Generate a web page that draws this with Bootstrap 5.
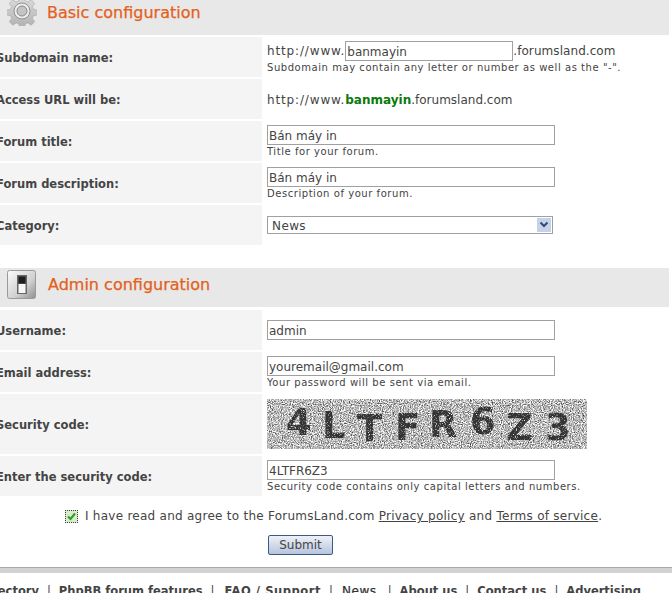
<!DOCTYPE html>
<html lang="en"><head><meta charset="utf-8"><title>Forum configuration</title>
<link href="https://cdn.jsdelivr.net/npm/bootstrap@5.3.0/dist/css/bootstrap.min.css" rel="stylesheet">
<style>
html,body{margin:0;height:593px;overflow:hidden;background:#fff}
body{font-family:"DejaVu Sans",Verdana,sans-serif;font-size:12px;color:#444;line-height:14px}
.sec-head{width:669px;background:#e8e8e8;color:#e4601b;font-size:16px;gap:10px;padding-left:7px;-webkit-text-stroke:.25px #e4601b}
.sec-one{height:35px;overflow:hidden;margin-bottom:2px;padding-bottom:10px}
.sec-one svg{margin-top:-3px}
.sec-two{height:39px;margin-top:23px;margin-bottom:3px;padding-bottom:6px;gap:12px}
.frow{display:flex;min-height:40px;margin-bottom:2px}
.cap-row{min-height:60px}
.lbl{width:262px;flex:none;background:#f4f4f4;font-weight:700;font-size:11.5px;color:#444;text-indent:-4px;padding-top:1px}
.val{padding-left:5px;flex:1 1 auto}
.cap-val{padding-top:5px}
.cap-val svg{display:block}
.hint{font-size:10px;line-height:11px;letter-spacing:.55px;display:block;margin-top:1px;color:#444}
.wide-txt{letter-spacing:.85px}
.dom-txt{letter-spacing:.07px}
.fld{border:1px solid #a0a0a0;height:20px;width:288px;padding:1px 2px 0 1px;font:12px "DejaVu Sans",sans-serif;color:#444;display:block;outline:0;background:#fff}
.fld-sub{width:168px;display:inline-block;vertical-align:middle}
.fld-top{margin-top:6px}
.fake-sel{width:286px;height:18px;border:1px solid #a0a0a0;padding:0 0 0 4px;letter-spacing:.4px}
.sel-txt{padding-top:1px}
.sel-btn{width:16px;height:16px;background:#c6d2ea;border:1px solid #fff;color:#3a4a66}
.access{padding-top:1px}
.access b{color:#0a7a0a}
.agree{margin-left:65px;margin-top:9px;gap:7px;height:22px;letter-spacing:.26px}
.agree a{color:#444}
.chk{width:13px;height:13px;border:1px dotted #444;background:#d9ecc9}
.sub-wrap{margin-top:8px;margin-left:268px}
.sub-btn{width:65px;height:20px;border:1px solid #3c5a82;border-radius:2px;background:linear-gradient(#eef1f8,#b6c4de);color:#444;font-size:12px;padding:0;line-height:16px}
.foot-line{height:6px;margin-top:12px;background:#d2d2d2;border-top:1px solid #aaa}
.foot-links{white-space:nowrap;font-size:11.5px;font-weight:700;margin-top:11px;padding-right:31px;gap:8px;color:#444}
.foot-links .sep{font-weight:400}
.foot-links .plain{font-weight:400;font-size:12px;letter-spacing:.6px;margin-right:3px;margin-left:1px;color:#333;-webkit-text-stroke:.25px #333}
.foot-links .faq{letter-spacing:.55px;margin-left:2px}
</style></head><body>
<main>
<div class="sec-head sec-one d-flex align-items-center">
<svg width="30" height="30" viewBox="0 0 30 30" aria-hidden="true"><defs><linearGradient id="g" x1="0" y1="0" x2="0" y2="1"><stop offset="0" stop-color="#dcdcdc"/><stop offset="1" stop-color="#b0b0b0"/></linearGradient></defs><path fill="url(#g)" stroke="#a8a8a8" stroke-width=".6" d="M12.500 1h5l.7 4 2.600 1.100 3.400-2.300 3.500 3.500-2.300 3.400 1.100 2.600 4 .7v5l-4 .7-1.100 2.600 2.300 3.400-3.500 3.500-3.400-2.300-2.600 1.100-.7 4h-5l-.7-4-2.600-1.100-3.400 2.300-3.500-3.500 2.300-3.400-1.100-2.600-4-.7v-5l4-.7 1.100-2.600-2.300-3.400 3.500-3.500 3.400 2.300 2.600-1.100z"/><circle cx="15" cy="15" r="8" fill="#ececec" stroke="#8f8f8f"/><circle cx="15" cy="15" r="5" fill="#c4c4c4" stroke="#8a8a8a"/></svg>
<span>Basic configuration</span>
</div>
<div class="frow"><div class="lbl d-flex align-items-center">Subdomain name:</div><div class="val pt-1"><span class="wide-txt">http://www.</span><input class="fld fld-sub" value="banmayin" aria-label="Subdomain"><span class="dom-txt">.forumsland.com</span><span class="hint">Subdomain may contain any letter or number as well as the "-".</span></div></div>
<div class="frow"><div class="lbl d-flex align-items-center">Access URL will be:</div><div class="val access d-flex align-items-center"><span><span class="wide-txt">http://www.</span><b>banmayin</b>.forumsland.com</span></div></div>
<div class="frow"><div class="lbl d-flex align-items-center">Forum title:</div><div class="val pt-1"><input class="fld" value="Bán máy in" aria-label="Forum title"><span class="hint">Title for your forum.</span></div></div>
<div class="frow"><div class="lbl d-flex align-items-center">Forum description:</div><div class="val pt-1"><input class="fld" value="Bán máy in" aria-label="Forum description"><span class="hint">Description of your forum.</span></div></div>
<div class="frow"><div class="lbl d-flex align-items-center">Category:</div><div class="val d-flex align-items-center"><div class="fake-sel d-flex align-items-center justify-content-between"><span class="sel-txt">News</span><span class="sel-btn d-flex align-items-center justify-content-center"><svg width="10" height="8" viewBox="0 0 10 8" aria-hidden="true"><path d="M1.500 1.500 5 5l3.500-3.500" fill="none" stroke="#3a4a66" stroke-width="2"/></svg></span></div></div></div>

<div class="sec-head sec-two d-flex align-items-center">
<svg width="29" height="29" viewBox="0 0 29 29" aria-hidden="true"><defs><linearGradient id="h" x1="0" y1="0" x2="1" y2="1"><stop offset="0" stop-color="#fbfbfb"/><stop offset=".6" stop-color="#d0d0d0"/><stop offset="1" stop-color="#8e8e8e"/></linearGradient></defs><rect x=".5" y=".5" width="28" height="28" rx="2" fill="url(#h)" stroke="#9a9a9a"/><rect x="10" y="5" width="10" height="19" fill="#666"/><rect x="11.500" y="6.500" width="7" height="7" fill="#1e1e1e"/><rect x="11.500" y="14" width="7" height="9" fill="#f6f6f6"/></svg>
<span>Admin configuration</span>
</div>
<div class="frow"><div class="lbl d-flex align-items-center">Username:</div><div class="val fld-top pt-1"><input class="fld" value="admin" aria-label="Username"></div></div>
<div class="frow"><div class="lbl d-flex align-items-center">Email address:</div><div class="val pt-1"><input class="fld" value="youremail@gmail.com" aria-label="Email address"><span class="hint">Your password will be sent via email.</span></div></div>
<div class="frow cap-row"><div class="lbl d-flex align-items-center">Security code:</div><div class="val cap-val">
<svg width="320" height="50" viewBox="0 0 320 50" role="img" aria-label="Captcha"><defs>
<filter id="n" x="0" y="0" width="100%" height="100%" color-interpolation-filters="sRGB"><feTurbulence type="fractalNoise" baseFrequency="0.9" numOctaves="2" seed="4"/><feColorMatrix values="1.500 0 0 0 -.02 1.500 0 0 0 -.02 1.500 0 0 0 -.02 0 0 0 0 1"/></filter>
<filter id="d" x="-5%" y="-5%" width="110%" height="110%" color-interpolation-filters="sRGB"><feTurbulence type="fractalNoise" baseFrequency="0.85" numOctaves="2" seed="9"/><feColorMatrix values="0 0 0 0 .2 0 0 0 0 .2 0 0 0 0 .2 5 0 0 0 -1.300"/><feComposite in2="SourceGraphic" operator="in"/></filter>
</defs>
<rect width="320" height="50" fill="#b0b0b0" filter="url(#n)"/>
<g font-family="'DejaVu Sans',sans-serif" font-weight="700" font-size="37" fill="#333" filter="url(#d)">
<text x="19" y="36">4</text><text x="55" y="39">L</text><text x="90" y="42">T</text><text x="128" y="41">F</text><text x="162" y="38">R</text><text x="203" y="35">6</text><text x="239" y="41">Z</text><text x="278" y="41">3</text>
</g>
</svg></div></div>
<div class="frow"><div class="lbl d-flex align-items-center">Enter the security code:</div><div class="val pt-1"><input class="fld" value="4LTFR6Z3" aria-label="Security code"><span class="hint">Security code contains only capital letters and numbers.</span></div></div>

<div class="agree d-flex align-items-center"><span class="chk d-flex align-items-center justify-content-center"><svg width="11" height="11" viewBox="0 0 11 11" aria-hidden="true"><path d="M2 5.500 4.500 8 9 2.500" fill="none" stroke="#2a9a2a" stroke-width="2"/></svg></span><span>I have read and agree to the ForumsLand.com <a href="#">Privacy policy</a> and <a href="#">Terms of service</a>.</span></div>
<div class="sub-wrap"><button type="button" class="sub-btn">Submit</button></div>
<div class="foot-line"></div>
<div class="foot-links d-flex justify-content-end"><span>Forum directory</span><span class="sep">|</span><span>PhpBB forum features</span><span class="sep">|</span><span class="faq">FAQ / Support</span><span class="sep">|</span><span class="plain">News</span><span class="sep">|</span><span>About us</span><span class="sep">|</span><span>Contact us</span><span class="sep">|</span><span>Advertising</span></div>
</main>
</body></html>
